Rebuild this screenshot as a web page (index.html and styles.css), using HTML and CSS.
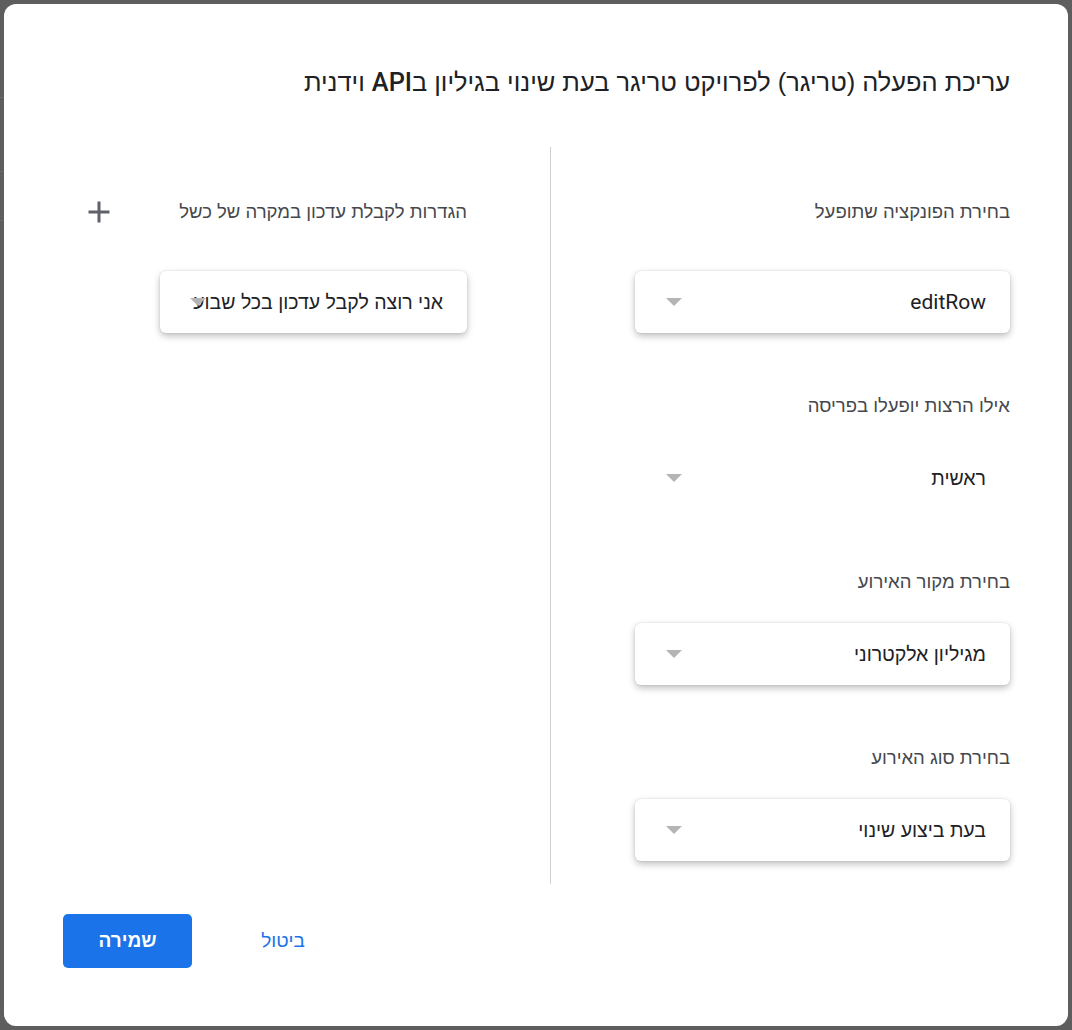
FILE: index.html
```html
<!DOCTYPE html>
<html lang="he">
<head>
<meta charset="utf-8">
<title>עריכת הפעלה</title>
<link rel="stylesheet" href="styles.css">
</head>
<body>
<div class="page-edge">
  <span class="edge-line l1"></span>
  <span class="edge-line l2"></span>
  <span class="edge-line l3"></span>
</div>
<div class="dialog" dir="rtl">
  <h1 class="title">עריכת הפעלה (טריגר) לפרויקט טריגר בעת שינוי בגיליון ב<span class="latin">API</span> וידנית</h1>
  <div class="columns">
    <div class="col col-main">
      <div class="field first">
        <div class="label">בחירת הפונקציה שתופעל</div>
        <div class="select"><span class="value latin-value">editRow</span><span class="arrow"></span></div>
      </div>
      <div class="field">
        <div class="label">אילו הרצות יופעלו בפריסה</div>
        <div class="select flat"><span class="value">ראשית</span><span class="arrow"></span></div>
      </div>
      <div class="field">
        <div class="label">בחירת מקור האירוע</div>
        <div class="select"><span class="value">מגיליון אלקטרוני</span><span class="arrow"></span></div>
      </div>
      <div class="field">
        <div class="label">בחירת סוג האירוע</div>
        <div class="select"><span class="value">בעת ביצוע שינוי</span><span class="arrow"></span></div>
      </div>
    </div>
    <div class="col col-side">
      <div class="field first">
        <div class="label-row">
          <div class="label">הגדרות לקבלת עדכון במקרה של כשל</div>
          <button class="icon-btn" aria-label="הוספה">
            <svg viewBox="0 0 24 24" width="36" height="36"><path d="M19 13h-6v6h-2v-6H5v-2h6V5h2v6h6v2z" fill="#5f6368"/></svg>
          </button>
        </div>
        <div class="select narrow"><span class="value">אני רוצה לקבל עדכון בכל שבוע</span><span class="arrow"></span></div>
      </div>
    </div>
  </div>
  <div class="footer">
    <button class="btn-primary">שמירה</button>
    <button class="btn-text">ביטול</button>
  </div>
</div>
</body>
</html>
```
FILE: styles.css
```css
* { box-sizing: border-box; }
html, body { margin: 0; padding: 0; }
body {
  background: #5e5e5e;
  width: 1072px;
  height: 1030px;
  overflow: hidden;
  position: relative;
  font-family: "Liberation Sans", Roboto, Arial, sans-serif;
  padding: 4px;
}
.page-edge { position: absolute; left: 0; top: 0; width: 4px; height: 1030px; }
.edge-line { position: absolute; left: 0; width: 4px; height: 1px; background: #6a6a6a; }
.l1 { top: 97px; }
.l2 { top: 171px; }
.l3 { top: 220px; }

.dialog {
  position: relative;
  width: 1064px;
  height: 1022px;
  background: #fff;
  border-radius: 12px;
  padding: 64px 58px 0 59px;
  display: flex;
  flex-direction: column;
}
.title {
  margin: 0;
  font-size: 25.4px;
  line-height: 28px;
  font-weight: 400;
  color: #202124;
}
.latin { font-family: Roboto, "Liberation Sans", sans-serif; font-weight: 500; }

.columns {
  display: flex;
  margin-top: 51px;
  height: 737px;
}
.col-main {
  width: 460px;
  border-left: 1px solid #d0d0d0;
  display: flex;
  flex-direction: column;
  align-items: flex-start;
  padding-top: 53px;
}
.col-side {
  flex: 1;
  padding: 53px 83px 0 18px;
}
.field { display: flex; flex-direction: column; align-items: flex-start; margin-top: 61px; }
.field.first { margin-top: 0; }
.col-main .field { width: 100%; }
.label {
  font-size: 18.5px;
  line-height: 24px;
  color: #45484c;
  margin-bottom: 29px;
}
.field.first .label { margin-bottom: 47px; }
.label-row {
  width: 100%;
  display: flex;
  justify-content: space-between;
  align-items: flex-start;
}
.icon-btn {
  border: 0;
  background: none;
  padding: 0;
  width: 36px;
  height: 36px;
  margin-top: -6px;
  display: block;
}
.icon-btn svg { display: block; }

.select {
  position: relative;
  width: 375px;
  height: 62px;
  background: #fff;
  border-radius: 6px;
  box-shadow: 0 3px 7px rgba(0,0,0,0.26), 0 0 2px rgba(0,0,0,0.12);
  padding: 0 24px;
  display: flex;
  align-items: center;
}
.select.flat { box-shadow: none; }
.select.narrow { width: 307px; }
.value {
  font-size: 19.5px;
  color: #202124;
  white-space: nowrap;
  position: relative;
}
.latin-value {
  font-family: Roboto, "Liberation Sans", sans-serif;
  font-size: 21px;
}
.arrow {
  position: absolute;
  left: 31px;
  top: 27px;
  width: 0;
  height: 0;
  border-left: 8px solid transparent;
  border-right: 8px solid transparent;
  border-top: 8px solid #b4b4b4;
}
.select.narrow .arrow { left: 30px; }

.footer {
  margin-top: 30px;
  display: flex;
  direction: ltr;
  align-items: center;
}
.btn-primary {
  width: 129px;
  height: 54px;
  border: 0;
  border-radius: 5px;
  background: #1a73e8;
  color: #fff;
  font-family: "Liberation Sans", Roboto, sans-serif;
  font-size: 19px;
  font-weight: 700;
}
.btn-text {
  margin-left: 46px;
  width: 90px;
  height: 54px;
  border: 0;
  background: none;
  color: #1a73e8;
  font-family: "Liberation Sans", Roboto, sans-serif;
  font-size: 19px;
}
```
